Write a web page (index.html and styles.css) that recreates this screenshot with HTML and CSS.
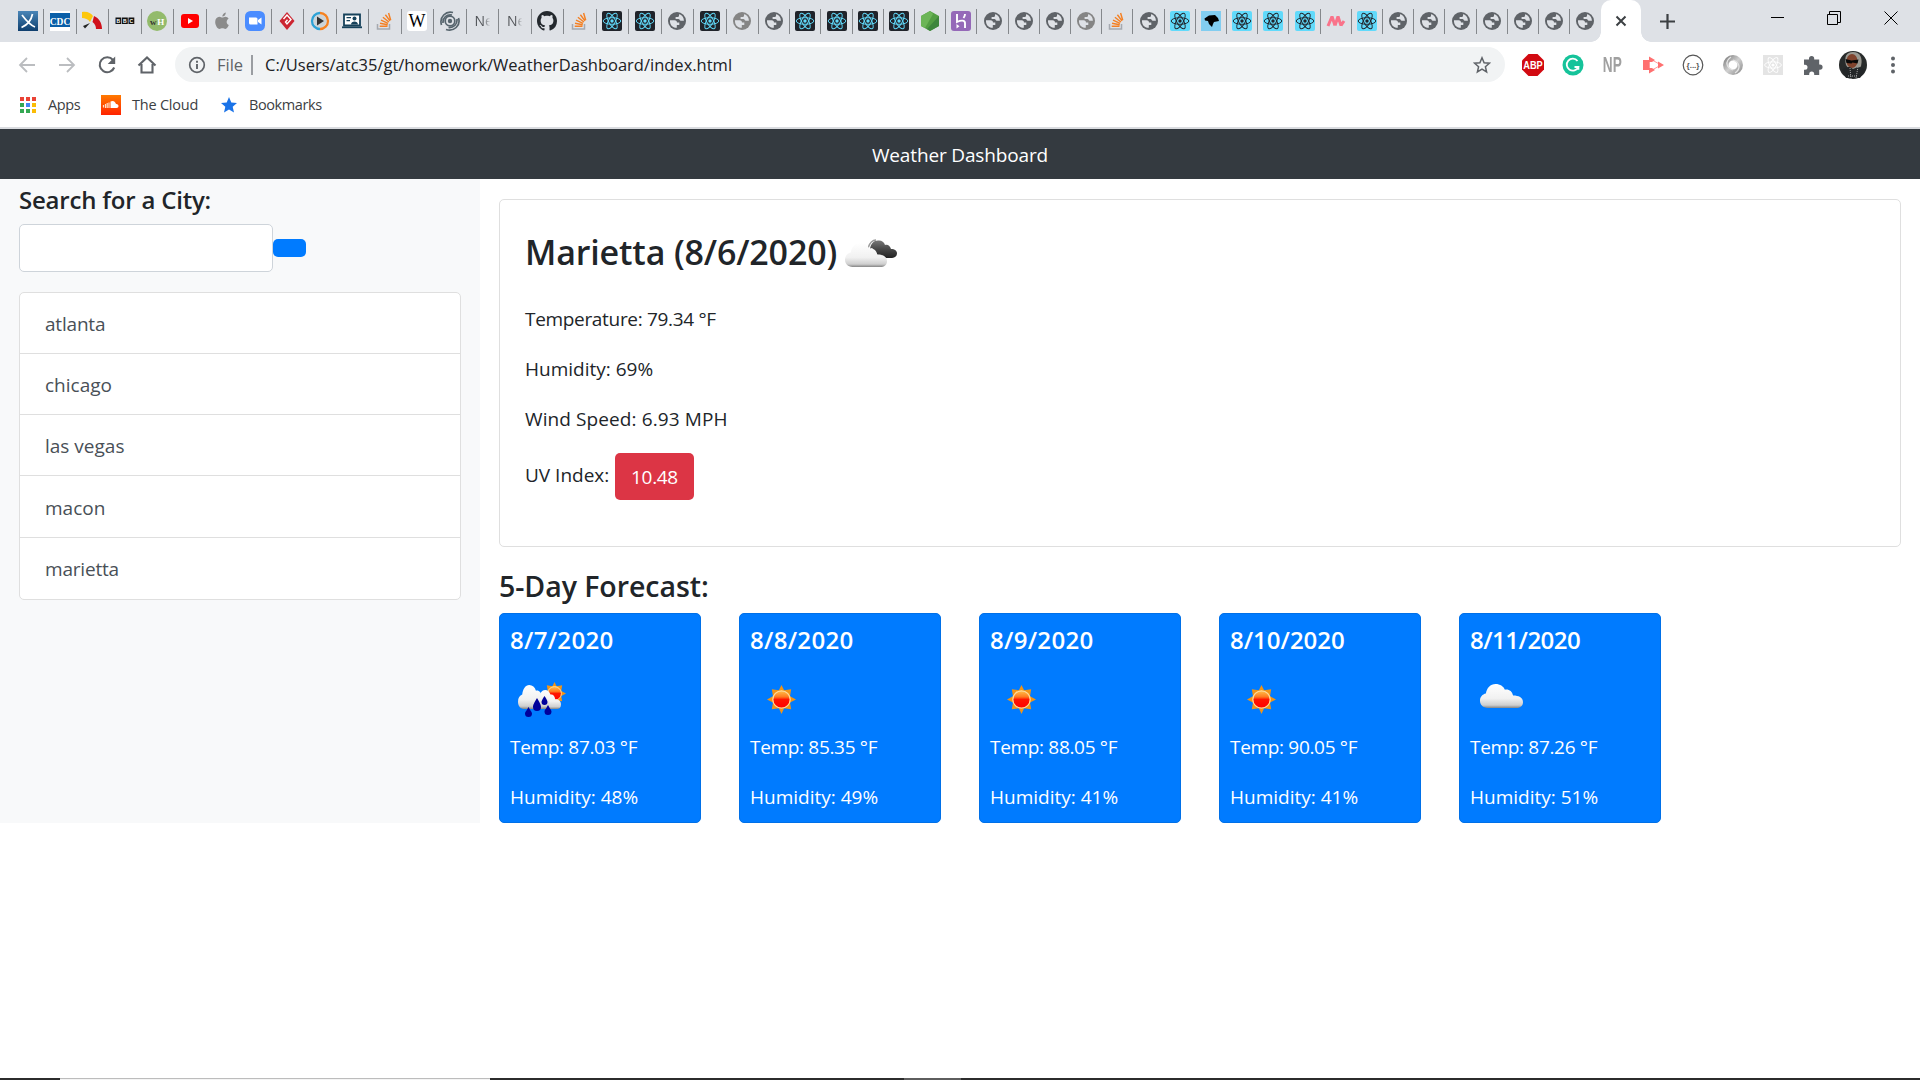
FILE: index.html
```html
<!DOCTYPE html>
<html lang="en">
<head>
<meta charset="utf-8">
<title>Weather Dashboard</title>
<link rel="stylesheet" href="styles.css">
</head>
<body>
<svg class="defs" aria-hidden="true">
  <defs>
    <linearGradient id="g-blue" x1="0" y1="0" x2="0" y2="1"><stop offset="0" stop-color="#4a86b8"/><stop offset="1" stop-color="#0f3f6e"/></linearGradient>
    <linearGradient id="g-cloud" x1="0" y1="0" x2="0" y2="1"><stop offset="0" stop-color="#fff"/><stop offset=".6" stop-color="#f1f1f1"/><stop offset=".88" stop-color="#cfcfcf"/><stop offset="1" stop-color="#858585"/></linearGradient>
    <linearGradient id="g-dark" x1="0" y1="0" x2="0" y2="1"><stop offset="0" stop-color="#777"/><stop offset=".5" stop-color="#484848"/><stop offset="1" stop-color="#222"/></linearGradient>
    <linearGradient id="g-sun" x1="0" y1="0" x2="0" y2="1"><stop offset="0" stop-color="#ffc04a"/><stop offset=".35" stop-color="#ff7a20"/><stop offset=".5" stop-color="#ff1500"/><stop offset="1" stop-color="#f00"/></linearGradient>
    <linearGradient id="g-ring" x1="0" y1="0" x2="1" y2="1"><stop offset="0" stop-color="#8a8a8a"/><stop offset=".5" stop-color="#d0d0d0"/><stop offset="1" stop-color="#999"/></linearGradient>
    <linearGradient id="g-orange" x1="0" y1="0" x2="0" y2="1"><stop offset="0" stop-color="#ff7a00"/><stop offset="1" stop-color="#ff2200"/></linearGradient>
  </defs>
  <symbol id="atom" viewBox="0 0 20 20"><g fill="none" stroke="currentColor" stroke-width=".95"><ellipse cx="10" cy="10" rx="8.8" ry="3.3"/><ellipse cx="10" cy="10" rx="8.8" ry="3.3" transform="rotate(60 10 10)"/><ellipse cx="10" cy="10" rx="8.8" ry="3.3" transform="rotate(120 10 10)"/></g><circle cx="10" cy="10" r="1.7" fill="currentColor"/></symbol>
  <symbol id="globe" viewBox="0 0 20 20"><circle cx="10" cy="10" r="9" fill="currentColor"/><path d="M3 9.200h4.500c1.900 0 2.500 1 2.500 2.300h2.300v2.600H9.800v2.700C5.500 16.900 2.600 13.500 3 9.200zM12 3.200v1.600c0 .8-.8 1.300-1.600 1.300H8.600v2h2.900c1.200 0 1 1.600 2.300 1.700h3.100C17 6.500 15 3.800 12 3.200z" fill="#dee1e6"/></symbol>
  <symbol id="stack" viewBox="0 0 20 20"><path d="M2.500 13v5h12v-5" fill="none" stroke="#a5a9b0" stroke-width="1.500"/><path d="M4.700 15.300h7.800M5 12.300l7.700 1.500M6 9.200l7.100 3.100M7.900 6.200l6 4.800M10.400 3.700l4.600 6.200M13.600 2l2.100 7.200" stroke="#f48024" stroke-width="1.450" fill="none"/></symbol>
  <symbol id="sun" viewBox="0 0 30 30"><path d="M15 0l2.700 5.400 7.300-1-1.200 7.200L30 15l-6.200 3.200 1.200 7-7.300-1.100L15 30l-2.700-5.900L5 25.200l1.200-7L0 15l6.200-3.400L5 4.400l7.300 1z" fill="#f29416"/><circle cx="15" cy="15" r="9" fill="url(#g-sun)" stroke="#ffdb9b" stroke-width="1.300"/></symbol>
  <symbol id="cloud" viewBox="0 0 44 25" preserveAspectRatio="none"><path d="M8 25C3 25 0 21.500 0 17.500c0-4 2.500-6.700 6-7.500C7 4 10.500 0 16 0c4.500 0 8 2.300 9.500 6 4-.8 7.500 1.600 8.300 6.100C39 12 44 14 44 19c0 4-3 6-7 6z" fill="url(#g-cloud)"/></symbol>
</svg>

<header class="browser">
  <div class="tabstrip">
    <div class="tabs">
      <div class="tab first"><svg class="fav" viewBox="0 0 20 20"><path fill="url(#g-blue)" d="M0 0h20v20H0z"/><path d="M4 4c3 4 8 10 13 12M14.500 3c-1 5-3 10-11 13.500" fill="none" stroke="#fff" stroke-width="1.700"/></svg></div>
      <div class="tab"><svg class="fav" viewBox="0 0 20 20"><path fill="#fff" d="M0 0h20v20H0z"/><path fill="#0a5fa8" d="M0 2h20v14H0z"/><text class="cdc" x="10" y="13.500">CDC</text></svg></div>
      <div class="tab"><svg class="fav" viewBox="0 0 20 20"><path d="M0 1c5-1 9 1 11 4L8 11C6 8 3 7 0 7z" fill="#fdc70c"/><path d="M12 5C17 7 20 12 20 18h-6c0-3-1-5-3.500-7z" fill="#d0111b"/><path d="M1 15l7-3-5 5.500z" fill="#222"/></svg></div>
      <div class="tab"><svg class="fav" viewBox="0 0 20 20"><path fill="#111" d="M.5 6.500h5.800v6.500H.5zM7 6.500h5.800v6.500H7zM13.500 6.500h5.800v6.500h-5.800z"/><text class="bbc" x="3.400" y="11.800">B</text><text class="bbc" x="9.900" y="11.800">B</text><text class="bbc" x="16.400" y="11.800">C</text></svg></div>
      <div class="tab"><svg class="fav" viewBox="0 0 20 20"><circle cx="10" cy="10" r="10" fill="#93bb6c"/><text class="wh dark" x="6.300" y="13.500">w</text><text class="wh" x="13.800" y="13.500">H</text></svg></div>
      <div class="tab"><svg class="fav" viewBox="0 0 20 20"><rect x="1" y="3" width="18" height="14" rx="3" fill="#f00"/><path d="M8 7l5 3-5 3z" fill="#fff"/></svg></div>
      <div class="tab"><svg class="fav" viewBox="0 0 20 20"><path d="M13.400 5.800c-1.300 0-2.200.8-3 .8s-1.800-.8-3-.8C5 5.900 3.200 8 3.200 10.900c0 3.200 2.300 7 4.200 7 1.100 0 1.700-.7 3-.7s1.800.7 3 .7c1.500 0 2.800-2.200 3.400-3.900-2.700-1.200-2.800-4.900-.2-6.300-.8-1.200-2-1.900-3.200-1.900zM10.300 5.500C10.200 3.500 11.900 1.600 13.800 1.400c.2 2.200-1.600 4.100-3.500 4.100z" fill="#8b8b8b"/></svg></div>
      <div class="tab"><svg class="fav" viewBox="0 0 20 20"><rect width="20" height="20" rx="5.500" fill="#4a8cff"/><path d="M4 6.500h7a1.500 1.500 0 0 1 1.500 1.500v5.500h-7A1.500 1.500 0 0 1 4 12zM13 9l3.500-2.500v7L13 11z" fill="#fff"/></svg></div>
      <div class="tab"><svg class="fav" viewBox="0 0 20 20"><path d="M10 1l7.500 9-7.500 9-7.500-9z" fill="#cc2531"/><path d="M6.500 8l3.500-4 4 4.500-4 4.500-1.500-2 2-2.200" stroke="#fff" stroke-width="1.400" fill="none"/></svg></div>
      <div class="tab"><svg class="fav" viewBox="0 0 20 20"><circle cx="10" cy="10" r="6.500" fill="#ccd4d8"/><path d="M10 2a8 8 0 1 0 0 16" fill="none" stroke="#2ea2d6" stroke-width="2.300"/><path d="M10 2a8 8 0 0 1 0 16" fill="none" stroke="#f58220" stroke-width="2.300"/><path d="M7 5.500l7 4.500-7 4.500z" fill="#333"/></svg></div>
      <div class="tab"><svg class="fav" viewBox="0 0 20 20"><path d="M2 3.500h16v11H2z" fill="#fff" stroke="#16425b" stroke-width="1.800"/><path d="M0 16.300h20" stroke="#16425b" stroke-width="1.800"/><path d="M4.500 6h4.500v1.300H4.500zM4.500 9H8v1.300H4.500zM9 13.500c0-4 7-4 7 0z" fill="#16425b"/><circle cx="12.500" cy="7.500" r="2" fill="#16425b"/></svg></div>
      <div class="tab"><svg class="fav"><use href="#stack"/></svg></div>
      <div class="tab"><svg class="fav" viewBox="0 0 20 20"><rect width="20" height="20" rx="3" fill="#fff"/><text class="wiki" x="10" y="15.800">W</text></svg></div>
      <div class="tab"><svg class="fav" viewBox="0 0 20 20"><g fill="none" stroke="#56646d" stroke-width="1.700"><circle cx="10" cy="10" r="4.800"/><path d="M1.500 14C-1 6 6-.5 13 1.500M6 18.500c8 2.500 15-4 12.500-11.500M3 12C2.500 6.500 7 3 12 4M8.500 16.500c5 .5 9-3.500 8.500-8.500"/></g><circle cx="10" cy="10" r="2.200" fill="#56646d"/></svg></div>
      <div class="tab"><span class="letter">Ne</span></div>
      <div class="tab"><span class="letter">Ne</span></div>
      <div class="tab"><svg class="fav" viewBox="0 0 16 16"><path fill="#24292e" d="M8 0C3.580 0 0 3.580 0 8c0 3.540 2.290 6.530 5.470 7.590.4.070.55-.17.55-.38 0-.19-.01-.82-.01-1.490-2.010.37-2.530-.49-2.690-.94-.09-.23-.48-.94-.82-1.130-.28-.15-.68-.52-.01-.53.63-.01 1.080.58 1.230.82.72 1.210 1.870.87 2.330.66.07-.52.28-.87.51-1.070-1.780-.2-3.640-.89-3.640-3.950 0-.87.31-1.590.82-2.150-.08-.2-.36-1.020.08-2.120 0 0 .67-.21 2.200.82.64-.18 1.320-.27 2-.27s1.360.09 2 .27c1.530-1.040 2.200-.82 2.200-.82.44 1.100.16 1.920.08 2.120.51.56.82 1.270.82 2.150 0 3.070-1.870 3.750-3.650 3.950.29.25.54.73.54 1.480 0 1.070-.01 1.930-.01 2.200 0 .21.15.46.55.38A8.010 8.010 0 0 0 16 8c0-4.420-3.580-8-8-8z"/></svg></div>
      <div class="tab"><svg class="fav"><use href="#stack"/></svg></div>
      <div class="tab"><svg class="fav react-dark"><use href="#atom"/></svg></div>
      <div class="tab"><svg class="fav react-dark"><use href="#atom"/></svg></div>
      <div class="tab"><svg class="fav globe"><use href="#globe"/></svg></div>
      <div class="tab"><svg class="fav react-dark"><use href="#atom"/></svg></div>
      <div class="tab"><svg class="fav globe pale"><use href="#globe"/></svg></div>
    </div>
    <div class="tabs narrow">
      <div class="tab"><svg class="fav globe"><use href="#globe"/></svg></div>
      <div class="tab"><svg class="fav react-dark"><use href="#atom"/></svg></div>
      <div class="tab"><svg class="fav react-dark"><use href="#atom"/></svg></div>
      <div class="tab"><svg class="fav react-dark"><use href="#atom"/></svg></div>
      <div class="tab"><svg class="fav react-dark"><use href="#atom"/></svg></div>
      <div class="tab"><svg class="fav" viewBox="0 0 20 20"><path d="M10 0l9 5v10l-9 5-9-5V5z" fill="#539e43"/><path d="M1 5l9-5 3 3-8 14-4-2z" fill="#6cb557"/><path d="M19 5v10l-9 5-3-2z" fill="#3e863d"/></svg></div>
      <div class="tab"><svg class="fav" viewBox="0 0 20 20"><rect width="20" height="20" rx="3" fill="#9569b8"/><path d="M6 3v8c4-2 8-2 8 1v5M14 3c0 2-.7 3-1.500 4" fill="none" stroke="#fff" stroke-width="1.900"/><path d="M5.500 13l3 2.200-3 2.300z" fill="#fff"/></svg></div>
      <div class="tab"><svg class="fav globe"><use href="#globe"/></svg></div>
      <div class="tab"><svg class="fav globe"><use href="#globe"/></svg></div>
      <div class="tab"><svg class="fav globe"><use href="#globe"/></svg></div>
      <div class="tab"><svg class="fav globe pale"><use href="#globe"/></svg></div>
      <div class="tab"><svg class="fav"><use href="#stack"/></svg></div>
      <div class="tab"><svg class="fav globe"><use href="#globe"/></svg></div>
      <div class="tab"><svg class="fav react-light"><use href="#atom"/></svg></div>
      <div class="tab"><svg class="fav" viewBox="0 0 20 20"><path fill="#82cdf0" d="M0 0h20v20H0z"/><path d="M3.500 7.500L8 4.500l6-.5 3 3 1 3-5 1-1 2-1 3-3-3-1-3-3-.5z" fill="#000"/></svg></div>
      <div class="tab"><svg class="fav react-light"><use href="#atom"/></svg></div>
      <div class="tab"><svg class="fav react-light"><use href="#atom"/></svg></div>
      <div class="tab"><svg class="fav react-light"><use href="#atom"/></svg></div>
      <div class="tab"><svg class="fav" viewBox="0 0 20 20"><path d="M2 15L6 5.500M6 5.500l3 9M9 14.500l3-9M12 5.500l3 9M15 14.500L18 10" fill="none" stroke="#f9738a" stroke-width="3"/></svg></div>
      <div class="tab"><svg class="fav react-light"><use href="#atom"/></svg></div>
      <div class="tab"><svg class="fav globe"><use href="#globe"/></svg></div>
      <div class="tab"><svg class="fav globe"><use href="#globe"/></svg></div>
      <div class="tab"><svg class="fav globe"><use href="#globe"/></svg></div>
      <div class="tab"><svg class="fav globe"><use href="#globe"/></svg></div>
      <div class="tab"><svg class="fav globe"><use href="#globe"/></svg></div>
      <div class="tab"><svg class="fav globe"><use href="#globe"/></svg></div>
      <div class="tab last"><svg class="fav globe"><use href="#globe"/></svg></div>
    </div>
    <div class="tab-active"><svg width="12" height="12" viewBox="0 0 12 12"><path d="M1.500 1.500l9 9m0-9l-9 9" stroke="#3c4043" stroke-width="2"/></svg></div>
    <div class="new-tab"><svg width="15" height="15" viewBox="0 0 15 15"><path d="M7.500 0v15M0 7.500h15" stroke="#3c4043" stroke-width="2.200"/></svg></div>
    <div class="window-controls">
      <svg viewBox="0 0 14 14"><path d="M1 6.500h13" stroke="#000"/></svg>
      <svg viewBox="0 0 14 14"><path d="M.5 3.500h10v10H.5zM2.500 3.500v-3h11v11h-3" fill="none" stroke="#000"/></svg>
      <svg viewBox="0 0 14 14"><path d="M.5.5l13 13m0-13l-13 13" stroke="#000"/></svg>
    </div>
  </div>

  <div class="toolbar">
    <svg class="nav" viewBox="0 0 20 20"><path d="M18 10H3m7-7l-7 7 7 7" stroke="#bbbdc0" stroke-width="1.800" fill="none"/></svg>
    <svg class="nav" viewBox="0 0 20 20"><path d="M2 10h15m-7-7l7 7-7 7" stroke="#bbbdc0" stroke-width="1.800" fill="none"/></svg>
    <svg class="nav" viewBox="0 0 20 20"><path d="M16 5a7.500 7.500 0 1 0 1.200 7.500" stroke="#5f6368" stroke-width="2.100" fill="none"/><path d="M18.200 1.500V9h-7.500z" fill="#5f6368"/></svg>
    <svg class="nav" viewBox="0 0 20 20"><path d="M1.500 10.500L10 2.500l8.500 8M4.500 9v8.500h11V9" stroke="#5f6368" stroke-width="2.100" fill="none"/></svg>
    <div class="omnibox">
      <svg class="info" viewBox="0 0 18 18"><circle cx="9" cy="9" r="7.300" fill="none" stroke="#5f6368" stroke-width="1.700"/><path d="M9 8v5M9 4.800v2" stroke="#5f6368" stroke-width="1.900"/></svg>
      <span class="scheme">File</span>
      <span class="divider"></span>
      <span class="url">C:/Users/atc35/gt/homework/WeatherDashboard/index.html</span>
      <svg class="star" viewBox="0 0 18 18"><path d="M9 1.800l2.100 4.900 5.300.5-4 3.500 1.200 5.200L9 13.200l-4.600 2.700 1.200-5.200-4-3.500 5.300-.5z" fill="none" stroke="#5f6368" stroke-width="1.500"/></svg>
    </div>
    <div class="extensions">
      <svg viewBox="0 0 22 22"><path d="M6.500 0h9L22 6.500v9L15.500 22h-9L0 15.500v-9z" fill="#d20a11"/><text class="abp" transform="translate(11 15) scale(.88 1)">ABP</text></svg>
      <svg viewBox="0 0 22 22"><circle cx="11" cy="11" r="10.500" fill="#15c39a"/><path d="M15.500 7a6 6 0 1 0 .8 6h-3.800M16.400 12.800v3" fill="none" stroke="#fff" stroke-width="1.800"/></svg>
      <span class="np"><span class="np-text">NP</span></span>
      <svg viewBox="0 0 22 22"><path d="M1 6h6v10H1z" fill="#ff7070"/><path d="M7.500 4.500L19 11 7.500 17.500z" fill="#fff" stroke="#ff9a9a" stroke-width="1"/><path d="M7 2.500l6 3.500-3 2H7zM22 11l-6-3.500v7zM7 19.500l6-3.500-3-2H7z" fill="#ff7070"/></svg>
      <svg viewBox="0 0 22 22"><circle cx="11" cy="11" r="9.800" fill="#fff" stroke="#555" stroke-width="1.200"/><text class="json" x="11" y="14">{...}</text></svg>
      <svg viewBox="0 0 22 22"><circle cx="11" cy="11" r="7.200" fill="none" stroke="url(#g-ring)" stroke-width="5.500"/><path d="M9 3c-7 5-4 11 2 13M13 19c7-5 4-11-2-13" stroke="#e4e4e4" stroke-width="1.300" fill="none"/></svg>
      <svg viewBox="0 0 22 22" class="react-off"><rect x="1" y="1" width="20" height="20" fill="#e4e4e4"/><use href="#atom" x="1.500" y="1.500" width="19" height="19"/></svg>
      <svg viewBox="0 0 22 22"><path d="M2 5.500h5V4.500a2.600 2.600 0 0 1 5.200 0v1h5v5h.8a2.600 2.600 0 0 1 0 5.200h-.8V21h-5v-1a2.500 2.500 0 0 0-5 0v1H2v-5.200h1a2.500 2.500 0 0 0 0-5H2z" fill="#5f6368"/></svg>
      <svg class="avatar" viewBox="0 0 28 28"><circle cx="14" cy="14" r="14" fill="#282b2b"/><path d="M7 14C5 6 7 1 14 1s10 6 8 14l-3 5h-8z" fill="#9a9992"/><ellipse cx="13" cy="10" rx="5.500" ry="7" fill="#80432d"/><path d="M6.500 8l6 1.500 7-1-1 4-5-1-1 1-5-.5z" fill="#080808"/><path d="M3 19c3-3 6-3 8-3l3 2 5-2c3 0 5 1 7 3l-5 8H7z" fill="#232628"/><path d="M11 17l1 11m7-12l-2 11M9 25h10" stroke="#aaa" stroke-dasharray="1 1"/></svg>
      <svg viewBox="0 0 22 22"><g fill="#5f6368"><circle cx="11" cy="4.500" r="2"/><circle cx="11" cy="11" r="2"/><circle cx="11" cy="17.500" r="2"/></g></svg>
    </div>
  </div>

  <nav class="bookmarks">
    <svg class="apps" viewBox="0 0 16 16"><path d="M0 0h4v4H0zM6 0h4v4H6zM12 0h4v4h-4z" fill="#ea4335"/><path d="M0 6h4v4H0zM0 12h4v4H0z" fill="#34a853"/><path d="M6 6h4v4H6z" fill="#4285f4"/><path d="M12 6h4v4h-4zM12 12h4v4h-4z" fill="#fbbc05"/><path d="M6 12h4v4H6z" fill="#34a853"/></svg>
    <span class="bm-apps">Apps</span>
    <svg class="sc" viewBox="0 0 20 20"><path fill="url(#g-orange)" d="M0 0h20v20H0z"/><path d="M9.500 6.500c3-1.500 5 .5 5.500 2.500 3-.5 3.500 4 .5 4h-6z" fill="#fff"/><path d="M2.500 10v2.500M4.500 9v4M6.200 8v5M8 7.500V13" stroke="#ffe0c8" stroke-width="1.200"/></svg>
    <span class="bm-cloud">The Cloud</span>
    <svg class="bm-star" viewBox="0 0 16 16"><path d="M8 0l2.300 5.400 5.700.5-4.300 3.800L13 15.500 8 12.400l-5 3.100 1.300-5.800L0 5.900l5.700-.5z" fill="#1a73e8"/></svg>
    <span class="bm-book">Bookmarks</span>
  </nav>
</header>

<div class="banner">Weather Dashboard</div>

<main class="page">
  <aside class="sidebar">
    <h3 class="search-title">Search for a City:</h3>
    <form class="search"><input class="search-input" type="text" aria-label="City"><button class="search-button" type="button" aria-label="Search"></button></form>
    <ul class="cities">
      <li>atlanta</li>
      <li>chicago</li>
      <li>las vegas</li>
      <li>macon</li>
      <li>marietta</li>
    </ul>
  </aside>
  <section class="content">
    <article class="current">
      <div class="current-head">
        <h2 class="current-title">Marietta (8/6/2020)</h2>
        <svg class="current-icon" viewBox="0 0 52 30"><path d="M25 10c1-6 4-9 9-8.500 3 0 5 1.500 6 4.500 3-1 5 1 6 4 4 0 6 2 6 4.500 0 3-3 4.500-6 4.500H35L27 9" fill="url(#g-dark)"/><path d="M23 9c2-6 5-8 8-8" fill="none" stroke="#999" stroke-width="1.500"/><use href="#cloud" x="0" y="4" width="42" height="24"/></svg>
      </div>
      <p class="temperature">Temperature: 79.34 °F</p>
      <p>Humidity: 69%</p>
      <p class="wind">Wind Speed: 6.93 MPH</p>
      <div class="uv"><span class="uv-label">UV Index:</span><span class="uv-value">10.48</span></div>
    </article>
    <h3 class="forecast-title">5-Day Forecast:</h3>
    <div class="forecast">
      <article class="day"><h5>8/7/2020</h5><svg viewBox="0 0 62 62"><use href="#sun" x="33" y="13" width="23" height="23"/><use href="#cloud" x="26" y="21" width="25" height="19"/><use href="#cloud" x="8" y="16" width="31" height="24"/><path d="M27 29c3 5 4 7 4 9a4 4 0 0 1-8 0c0-2 1-4 4-9zM34.500 27c2 3 3 5 3 6a3 3 0 0 1-6 0c0-1 1-3 3-6zM18.500 38c2 4 3.500 5 3.500 6.500a3.400 3.400 0 0 1-7 0c0-1.500 1.500-2.500 3.500-6.500zM38 36c2 4 3.500 5 3.500 6.500a3.400 3.400 0 0 1-7 0c0-1.500 1.500-2.500 3.500-6.500z" fill="#00009b"/></svg><p class="temperature">Temp: 87.03 °F</p><p>Humidity: 48%</p></article>
      <article class="day"><h5>8/8/2020</h5><svg viewBox="0 0 62 62"><use href="#sun" x="17" y="16" width="29" height="29"/></svg><p class="temperature">Temp: 85.35 °F</p><p>Humidity: 49%</p></article>
      <article class="day"><h5>8/9/2020</h5><svg viewBox="0 0 62 62"><use href="#sun" x="17" y="16" width="29" height="29"/></svg><p class="temperature">Temp: 88.05 °F</p><p>Humidity: 41%</p></article>
      <article class="day"><h5 class="long">8/10/2020</h5><svg viewBox="0 0 62 62"><use href="#sun" x="17" y="16" width="29" height="29"/></svg><p class="temperature">Temp: 90.05 °F</p><p>Humidity: 41%</p></article>
      <article class="day"><h5 class="longer">8/11/2020</h5><svg viewBox="0 0 62 62"><use href="#cloud" x="10" y="15" width="43" height="24"/></svg><p class="temperature">Temp: 87.26 °F</p><p>Humidity: 51%</p></article>
    </div>
  </section>
</main>

<footer class="taskbar"><span class="task-search"></span><span class="task-active"></span></footer>
</body>
</html>
```
FILE: styles.css
```css
* { box-sizing: border-box; }
body {
  margin: 0;
  height: 1080px;
  display: flex;
  flex-direction: column;
  overflow: hidden;
  background: #fff;
  color: #212529;
  font: 400 19px/30px "Open Sans", "Noto Sans", sans-serif;
  letter-spacing: 0;
}
h2, h3, h5, p, ul { margin: 0; padding: 0; }
svg { display: block; flex: none; }
.defs { position: absolute; width: 0; height: 0; }

/* Browser chrome */
.browser { height: 129px; border-bottom: 2px solid #dadce0; flex: none; }
.tabstrip { display: flex; height: 42px; background: #dee1e6; }
.tabs { display: flex; align-items: center; flex: none; }
.tab {
  display: flex;
  align-items: center;
  justify-content: center;
  flex: none;
  width: 32.51px;
  height: 25px;
  border-right: 1px solid #85888c;
}
.tab.first { width: 44px; padding-left: 12px; }
.narrow .tab { width: 31.21px; }
.tab.last { border-right-color: transparent; }
.fav { width: 20px; height: 20px; }
.globe { color: #5f6368; }
.globe.pale { color: #858585; }
.react-dark { background: #20232a; color: #61dafb; border-radius: 2px; }
.react-light { background: #61dafb; color: #20232a; border-radius: 2px; }
.react-off { color: #fff; }
.letter {
  margin-left: 3px;
  font-size: 14px;
  background: linear-gradient(90deg, #4d5054 45%, #dee1e6 85%);
  background-clip: text;
  -webkit-background-clip: text;
  color: transparent;
}
.cdc, .bbc, .wh, .wiki, .abp, .json { text-anchor: middle; letter-spacing: 0; }
.cdc { font: 700 9.500px "Liberation Serif", serif; fill: #fff; }
.bbc { font: 700 5px "Liberation Sans", sans-serif; fill: #fff; }
.wh { font: 700 9px "Liberation Serif", serif; fill: #fff; }
.wh.dark { fill: #333; }
.wiki { font: 400 18px "Liberation Serif", serif; fill: #000; }
.abp { font: 700 10.500px "Liberation Sans", sans-serif; fill: #fff; }
.np { display: flex; align-items: center; justify-content: center; width: 22px; height: 22px; }
.np-text { font: 700 22px/26px "Liberation Sans", sans-serif; color: #a0a0a0; transform: scaleX(0.62); }
.json { font: 700 8px "Liberation Sans", sans-serif; fill: #555; }
.tab-active {
  position: relative;
  display: flex;
  align-items: center;
  justify-content: center;
  width: 40px;
  background: #fff;
  border-radius: 10px 10px 0 0;
}
.tab-active::before, .tab-active::after {
  content: "";
  position: absolute;
  bottom: 0;
  width: 10px;
  height: 10px;
}
.tab-active::before { left: -10px; background: radial-gradient(circle at 0 0, transparent 9.500px, #fff 10px); }
.tab-active::after { right: -10px; background: radial-gradient(circle at 100% 0, transparent 9.500px, #fff 10px); }
.new-tab { display: flex; align-items: center; margin-left: 19px; }
.window-controls { display: flex; gap: 43px; margin-left: auto; padding: 11px 22px 0 0; }
.window-controls svg { width: 14px; height: 14px; }

.toolbar { display: flex; align-items: center; height: 45px; padding-left: 17px; }
.nav { width: 20px; height: 20px; margin-right: 20px; }
.omnibox {
  display: flex;
  align-items: center;
  width: 1330px;
  height: 35px;
  margin-left: -2px;
  padding: 0 14px;
  border-radius: 18px;
  background: #f1f3f4;
  font-size: 16.500px;
}
.info { width: 18px; height: 18px; margin: 0 11px 0 -1px; }
.scheme { width: 34px; color: #5f6368; }
.divider { width: 2px; height: 20px; margin-right: 12px; background: #9a9da1; }
.url { color: #202124; }
.star { width: 18px; height: 18px; margin-left: auto; }
.extensions { display: flex; align-items: center; gap: 18px; margin-left: 16.500px; }
.extensions svg { width: 22px; height: 22px; }
.extensions .avatar { width: 28px; height: 28px; margin: 0 -3px; }

.bookmarks { display: flex; align-items: center; height: 36px; padding-left: 20px; font-size: 14.500px; color: #3c4043; letter-spacing: -0.4px; }
.apps { width: 16px; height: 16px; margin-right: 12px; }
.bm-apps { width: 53px; }
.sc { width: 20px; height: 20px; margin-right: 11px; }
.bm-cloud { width: 89px; letter-spacing: -0.22px; }
.bm-star { width: 16px; height: 16px; margin-right: 12px; }

/* Page */
.banner { height: 50px; flex: none; background: #343a40; color: #fff; line-height: 52px; text-align: center; letter-spacing: -0.15px; }
.page { display: flex; flex: none; height: 644px; }
.sidebar { width: 480px; padding: 5px 19px 0; background: #f8f9fa; }
h2, h3, h5 { font-weight: 600; }
.search-title { height: 40px; font-size: 24px; line-height: 31px; letter-spacing: -0.2px; }
.search { display: flex; align-items: center; height: 48px; margin-bottom: 20px; }
.search-input { width: 254px; height: 48px; border: 1px solid #ced4da; border-radius: 5px; background: #fff; }
.search-button { width: 33px; height: 18px; padding: 0; border: 0; border-radius: 5px; background: #007bff; }
.cities { border: 1px solid #dfdfdf; border-radius: 5px; background: #fff; list-style: none; color: #495057; }
.cities li { height: 61px; padding: 16px 25px 0; border-bottom: 1px solid #dfdfdf; }
.cities li:nth-child(4) { height: 62px; padding-top: 17px; }
.cities li:last-child { border-bottom: 0; }
.cities li:first-child, .cities li:last-child { letter-spacing: -0.2px; }
.content { flex: 1; padding: 20px 19px 0; }
.current { height: 348px; padding: 25px; border: 1px solid #dfdfdf; border-radius: 5px; }
.current-head { display: flex; align-items: center; height: 54px; margin-bottom: 25px; }
.current-title { font-size: 34px; line-height: 56px; letter-spacing: -0.15px; }
.current-icon { width: 52px; height: 30px; margin: 4px 0 0 8px; }
.current p { margin-bottom: 20px; }
p.temperature { letter-spacing: -0.32px; }
p.wind { letter-spacing: 0.1px; }
.uv { display: flex; height: 47px; margin-top: -1px; }
.uv-label { width: 90px; line-height: 44px; }
.uv-value { width: 79px; border-radius: 5px; background: #dc3545; color: #fff; line-height: 49px; text-align: center; letter-spacing: -0.32px; }
.forecast-title { height: 36px; margin: 20px 0 10px; font-size: 28.500px; line-height: 38px; letter-spacing: -0.05px; }
.forecast { display: flex; gap: 38px; }
.day { width: 202px; height: 210px; padding: 10px; border: 1px solid #0070e8; border-radius: 5px; background: #007bff; color: #fff; }
.day h5 { height: 30px; font-size: 24px; line-height: 32px; letter-spacing: 0.3px; }
.day h5.long { letter-spacing: 0; }
.day h5.longer { letter-spacing: -0.5px; }
.day svg { width: 62px; height: 62px; margin: 15px 0 1px; }
.day p + p { margin-top: 20px; }

/* Edge of the auto-hidden taskbar */
.taskbar { display: flex; height: 2px; margin-top: auto; padding-left: 60px; background: #2c2c2c; }
.task-search { width: 430px; border-top: 1px solid #bcbcbc; background: #f4f4f4; }
.task-active { width: 57px; margin-left: 414px; background: #5e5e5e; }
```
